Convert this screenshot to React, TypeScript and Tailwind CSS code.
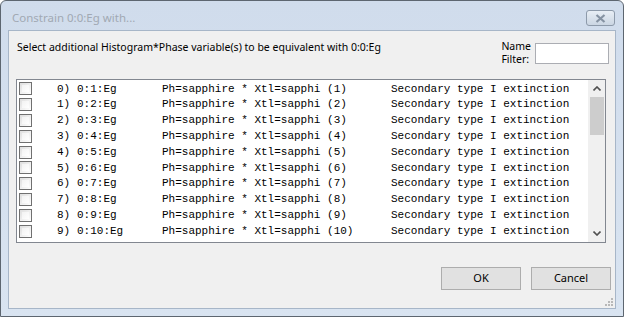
import React from 'react';

const rows = Array.from({ length: 10 }, (_, i) => ({
  idx: `${i})`,
  name: `0:${i + 1}:Eg`,
  phase: `Ph=sapphire * Xtl=sapphi (${i + 1})`,
  desc: 'Secondary type I extinction',
}));

const ui = { fontFamily: '"Noto Sans", "Open Sans", sans-serif' };
const mono = { fontFamily: '"Liberation Mono", "Courier New", monospace' };

const CheckBox: React.FC = () => (
  <div className="w-[13px] h-[13px] border border-[#707070] bg-gradient-to-br from-[#dedede] to-white p-[2px]">
    <div className="w-full h-full bg-gradient-to-br from-[#f2f2f2] to-white" />
  </div>
);

const ConstrainDialog: React.FC = () => {
  return (
    <div className="w-[624px] h-[317px] bg-white">
      <div className="w-full h-full flex flex-col border border-[#5d6670] rounded-t-[6px] bg-gradient-to-b from-[#d0dcec] to-[#d9e4f1]">
        {/* title bar */}
        <div className="h-[29px] flex items-start justify-between pl-[11px] pr-[8px]">
          <span className="mt-[8px] text-[11.5px] text-[#a1a9b3]" style={ui}>
            Constrain 0:0:Eg with...
          </span>
          <div className="mt-[9px] w-[29px] h-[16px] border border-[#8d9aaa] rounded-[3px] bg-gradient-to-b from-[#e8eef5] to-[#cbd6e3] flex items-center justify-center">
            <svg width="11" height="9" viewBox="0 0 11 9">
              <path d="M1.5 1 L9.5 8 M9.5 1 L1.5 8" stroke="#8592a2" strokeWidth="2.2" fill="none" />
            </svg>
          </div>
        </div>

        {/* client area */}
        <div className="flex-1 mx-[7px] mb-[7px] border border-[#a7b6c8] bg-[#f0f0f0] flex flex-col pt-[8px] pl-[7px] pr-[8px]">
          <div className="flex justify-between items-start h-[40px]">
            <span className="mt-[1px] ml-[1px] text-[10.5px] text-black" style={ui}>
              Select additional Histogram*Phase variable(s) to be equivalent with 0:0:Eg
            </span>
            <div className="flex items-start gap-[4px] mr-[-2px] mt-[4px]">
              <div className="flex flex-col mt-[-3px] text-[10.5px] leading-[13px] text-black" style={ui}>
                <span>Name</span>
                <span>Filter:</span>
              </div>
              <div className="w-[74px] h-[21px] border border-[#abadb3] bg-white" />
            </div>
          </div>

          {/* list box */}
          <div className="h-[164px] mr-[1px] border border-[#828790] bg-white flex">
            <div className="flex-1 flex flex-col pt-[1px]">
              {rows.map((r) => (
                <div key={r.idx} className="h-[15.8px] flex items-center text-[11px] text-black" style={mono}>
                  <div className="w-[40px] pl-[2px]">
                    <CheckBox />
                  </div>
                  <span className="w-[20px]">{r.idx}</span>
                  <span className="w-[85px]">{r.name}</span>
                  <span className="w-[229px] whitespace-pre">{r.phase}</span>
                  <span>{r.desc}</span>
                </div>
              ))}
            </div>
            <div className="w-[17px] bg-[#f0f0f0] flex flex-col border-l border-[#f0f0f0]">
              <div className="h-[17px] flex items-center justify-center">
                <svg width="8" height="5" viewBox="0 0 8 5">
                  <path d="M0.5 4.5 L4 1 L7.5 4.5" stroke="#505050" strokeWidth="1.6" fill="none" />
                </svg>
              </div>
              <div className="h-[38px] mx-[1px] bg-[#cdcdcd]" />
              <div className="flex-1" />
              <div className="h-[17px] flex items-center justify-center">
                <svg width="8" height="5" viewBox="0 0 8 5">
                  <path d="M0.5 0.5 L4 4 L7.5 0.5" stroke="#505050" strokeWidth="1.6" fill="none" />
                </svg>
              </div>
            </div>
          </div>

          {/* buttons */}
          <div className="flex justify-end gap-[10px] mt-[24px] mr-[-4px]">
            <button className="w-[80px] h-[23px] border border-[#adadad] bg-[#e1e1e1] text-[11px] text-black" style={ui}>
              OK
            </button>
            <button className="w-[80px] h-[23px] border border-[#adadad] bg-[#e1e1e1] text-[11px] text-black" style={ui}>
              Cancel
            </button>
          </div>
          <div className="flex-1 flex justify-end items-end pb-[2px] mr-[-6px]">
            <svg width="8" height="8" viewBox="0 0 8 8">
              <g fill="#b8b8b8">
                <rect x="6" y="0" width="2" height="2" />
                <rect x="3" y="3" width="2" height="2" />
                <rect x="6" y="3" width="2" height="2" />
                <rect x="0" y="6" width="2" height="2" />
                <rect x="3" y="6" width="2" height="2" />
                <rect x="6" y="6" width="2" height="2" />
              </g>
            </svg>
          </div>
        </div>
      </div>
    </div>
  );
};

export default function App() {
  return <ConstrainDialog />;
}
